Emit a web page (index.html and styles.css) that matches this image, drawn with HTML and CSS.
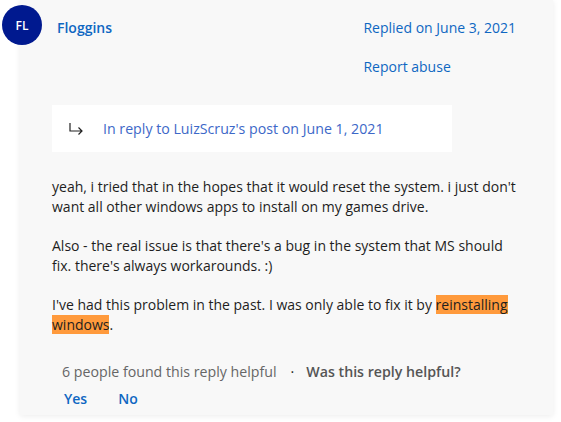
FILE: index.html
```html
<!DOCTYPE html>
<html lang="en">

<head>
    <meta charset="UTF-8">
    <meta name="viewport" content="width=device-width, initial-scale=1.0">
    <title>Reply</title>
    <link rel="stylesheet" href="styles.css">
</head>

<body>

    <article class="reply">
        <header class="reply-head">
            <div class="avatar">FL</div>
            <a class="author" href="#">Floggins</a>
            <div class="meta">
                <a href="#">Replied on June 3, 2021</a>
                <a href="#">Report abuse</a>
            </div>
        </header>

        <div class="in-reply">
            <svg class="reply-icon" width="16" height="14" viewBox="0 0 16 14">
                <path d="M2 1 V9 H14 M10.5 5.5 L14 9 L10.5 12.5" fill="none" stroke="#222" stroke-width="1.2" />
            </svg>
            <a href="#">In reply to LuizScruz's post on June 1, 2021</a>
        </div>

        <div class="reply-body">
            <p>yeah, i tried that in the hopes that it would reset the system. i just don't want all other windows apps to install on my games drive.</p>
            <p>Also - the real issue is that there's a bug in the system that MS should fix. there's always workarounds. :)</p>
            <p>I've had this problem in the past. I was only able to fix it by <mark>reinstalling</mark> <mark>windows</mark>.</p>
        </div>

        <footer class="reply-foot">
            <div class="helpful">
                <span>6 people found this reply helpful</span>
                <span class="dot">&middot;</span>
                <strong>Was this reply helpful?</strong>
            </div>
            <div class="votes">
                <a href="#">Yes</a>
                <a href="#">No</a>
            </div>
        </footer>
    </article>

</body>

</html>
```

FILE: styles.css
```css
body {
    margin: 0;
    padding: 0;
    background: #fff;
    font-family: "Open Sans", "Noto Sans", sans-serif;
    font-size: 14px;
    color: #1e1e1e;
}

a {
    text-decoration: none;
    color: #0f67c2;
}

.reply {
    margin: 0 8px 7px 20px;
    height: 415px;
    box-sizing: border-box;
    background: #f8f8f8;
    box-shadow: 0 1px 6px rgba(0, 0, 0, 0.08);
    padding: 5px 0 0 0;
}

.reply-head {
    display: flex;
    align-items: flex-start;
}

.avatar {
    width: 40px;
    height: 40px;
    margin-left: -18px;
    border-radius: 50%;
    background: #00198f;
    color: #fff;
    font-size: 12px;
    font-weight: 600;
    display: flex;
    align-items: center;
    justify-content: center;
}

.author {
    margin-left: 15px;
    margin-top: 13px;
    font-weight: 600;
    font-size: 14px;
}

.meta {
    margin-left: auto;
    margin-right: 37px;
    margin-top: 13px;
    display: flex;
    flex-direction: column;
    gap: 20px;
}

.in-reply {
    margin: 29px 0 0 32px;
    width: 400px;
    height: 47px;
    background: #fff;
    display: flex;
    align-items: center;
}

.in-reply .reply-icon {
    margin-left: 16px;
    margin-right: 19px;
}

.in-reply a {
    color: #3d68c8;
    font-size: 14.2px;
}

.reply-body {
    margin: 25px 0 0 32px;
    width: 470px;
    line-height: 20px;
    font-size: 14px;
}

.reply-body p {
    margin: 0 0 19px 0;
}

.reply-body mark {
    background: #ff9a3c;
    color: #1e1e1e;
}

.reply-foot {
    margin: 27px 0 0 42px;
}

.helpful {
    color: #666;
    display: flex;
    align-items: center;
    font-size: 14.2px;
}

.helpful .dot {
    margin: 0 12px 0 14px;
    color: #222;
}

.helpful strong {
    color: #555;
    font-weight: 600;
}

.votes {
    margin-top: 8px;
    display: flex;
    gap: 31px;
    padding-left: 2px;
}

.votes a {
    font-weight: 600;
}
```
